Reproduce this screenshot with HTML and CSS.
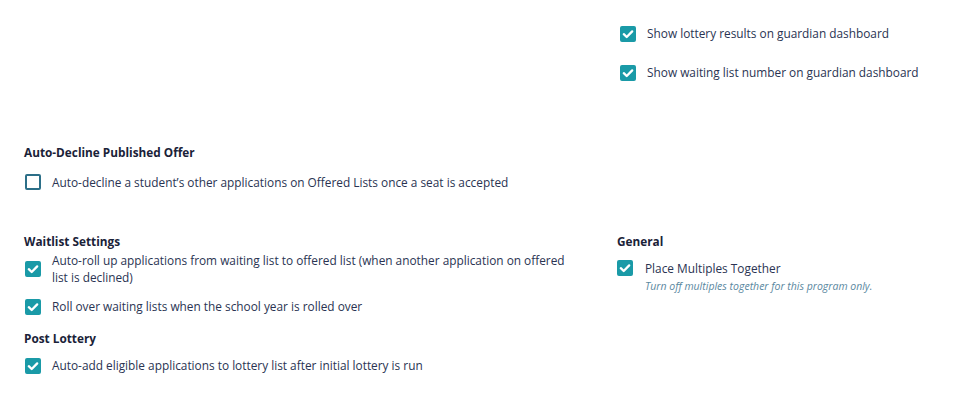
FILE: index.html
```html
<!DOCTYPE html>
<html lang="en">
<head>
  <meta charset="UTF-8">
  <title>Lottery Settings</title>
  <link rel="stylesheet" href="styles.css">
</head>
<body>

  <div class="top-row">
    <div class="top-options">
      <label class="option">
        <span class="box checked"><svg viewBox="0 0 16 16"><path d="M3.8 8.2l2.9 2.8 5.5-5.6"/></svg></span>
        <span class="text">Show lottery results on guardian dashboard</span>
      </label>
      <label class="option">
        <span class="box checked"><svg viewBox="0 0 16 16"><path d="M3.8 8.2l2.9 2.8 5.5-5.6"/></svg></span>
        <span class="text">Show waiting list number on guardian dashboard</span>
      </label>
    </div>
  </div>

  <section class="decline">
    <h3>Auto-Decline Published Offer</h3>
    <label class="option">
      <span class="box"></span>
      <span class="text">Auto-decline a student’s other applications on Offered Lists once a seat is accepted</span>
    </label>
  </section>

  <div class="columns">
    <div class="col-left">
      <h3 class="waitlist">Waitlist Settings</h3>
      <label class="option">
        <span class="box checked"><svg viewBox="0 0 16 16"><path d="M3.8 8.2l2.9 2.8 5.5-5.6"/></svg></span>
        <span class="text">Auto-roll up applications from waiting list to offered list (when another application on offered list is declined)</span>
      </label>
      <label class="option">
        <span class="box checked"><svg viewBox="0 0 16 16"><path d="M3.8 8.2l2.9 2.8 5.5-5.6"/></svg></span>
        <span class="text">Roll over waiting lists when the school year is rolled over</span>
      </label>

      <h3 class="post">Post Lottery</h3>
      <label class="option">
        <span class="box checked"><svg viewBox="0 0 16 16"><path d="M3.8 8.2l2.9 2.8 5.5-5.6"/></svg></span>
        <span class="text">Auto-add eligible applications to lottery list after initial lottery is run</span>
      </label>
    </div>

    <div class="col-right">
      <h3>General</h3>
      <label class="option">
        <span class="box checked"><svg viewBox="0 0 16 16"><path d="M3.8 8.2l2.9 2.8 5.5-5.6"/></svg></span>
        <span class="text">Place Multiples Together
          <em class="hint">Turn off multiples together for this program only.</em>
        </span>
      </label>
    </div>
  </div>

</body>
</html>
```

FILE: styles.css
```css
body {
  font-family: 'Open Sans', sans-serif;
  background: #fff;
  color: #2a3452;
  margin: 0;
  padding: 0 24px;
  font-size: 11.85px;
}

h3 {
  font-size: 11.8px;
  font-weight: 700;
  line-height: 16px;
  color: #1a2238;
  margin: 0 0 9px;
}

.option {
  display: flex;
  align-items: center;
  gap: 11px;
  line-height: 17px;
}

.box {
  flex: none;
  width: 16px;
  height: 16px;
  box-sizing: border-box;
  border: 2px solid #2c6f88;
  border-radius: 2px;
  background: #fff;
  display: flex;
}

.box.checked {
  background: #1a9aa7;
  border-color: #1a9aa7;
}

.box svg {
  width: 16px;
  height: 16px;
  margin: -2px;
}

.box svg path {
  fill: none;
  stroke: #fff;
  stroke-width: 2.3;
  stroke-linecap: round;
  stroke-linejoin: round;
}

.top-row {
  display: flex;
  padding: 25px 0 0 596px;
}

.top-options .option {
  margin-bottom: 22px;
}

.decline {
  padding-top: 41px;
}

.decline h3 {
  margin-bottom: 13.5px;
}

.decline .option {
  margin-left: 1px;
}

.columns {
  display: grid;
  grid-template-columns: 593px 1fr;
  padding-top: 42px;
}

.col-left .option {
  margin-left: 1px;
  margin-bottom: 12px;
  max-width: 544px;
}

h3.waitlist {
  margin-bottom: 3.5px;
}

h3.post {
  margin-top: 14.5px;
  margin-bottom: 11.5px;
}

.col-right .option {
  gap: 12px;
  margin-top: 11.5px;
  align-items: flex-start;
}

.hint {
  display: block;
  font-size: 10.5px;
  color: #5a88a0;
  line-height: 19px;
}
```
